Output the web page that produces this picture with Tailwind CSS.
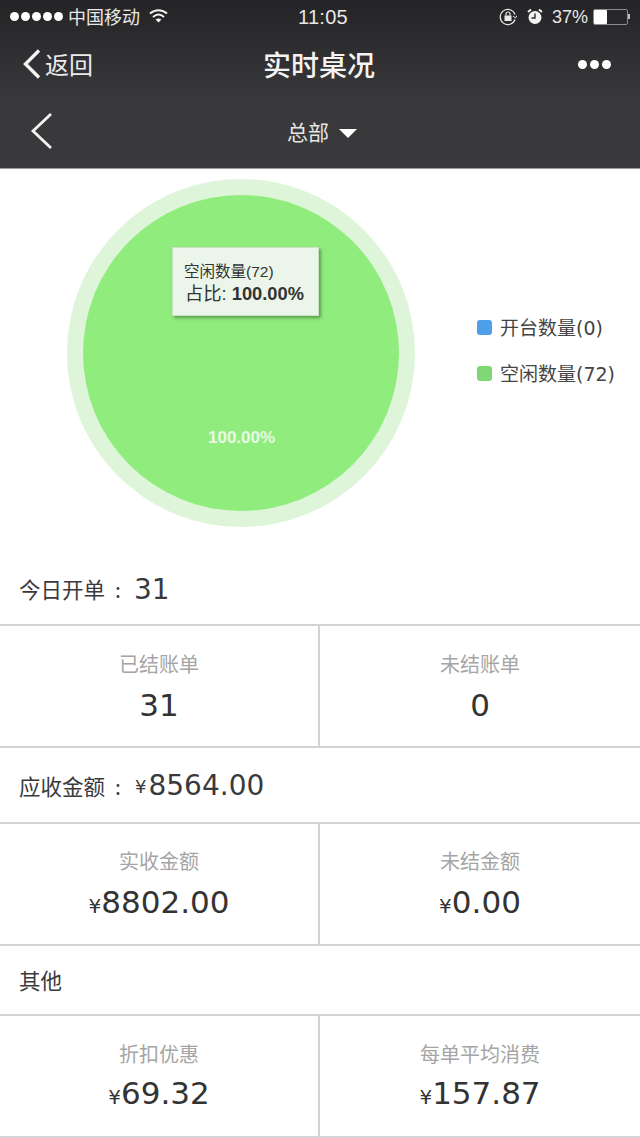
<!DOCTYPE html>
<html lang="zh-CN">

<head>
    <meta charset="UTF-8">
    <title>实时桌况</title>
    <script src="https://cdn.jsdelivr.net/npm/@tailwindcss/browser@4"></script>
</head>

<body class="bg-white w-[640px] h-[1138px] overflow-hidden font-['Noto_Sans_CJK_SC',sans-serif]">

    <!-- top dark header -->
    <div class="h-[169px] bg-gradient-to-b from-[#242325] via-[#39393b] via-60% to-[#39393b] border-b border-[#9a9a9a] text-white flex flex-col">
        <div class="h-[33px] flex items-center pl-[10px] pr-[10px] text-[18px] text-[#e8e8e8]">
            <div class="flex items-center w-[286px] -mt-[1px]">
                <div class="flex gap-[2px]">
                    <span class="w-[9px] h-[9px] rounded-full bg-white"></span>
                    <span class="w-[9px] h-[9px] rounded-full bg-white"></span>
                    <span class="w-[9px] h-[9px] rounded-full bg-white"></span>
                    <span class="w-[9px] h-[9px] rounded-full bg-white"></span>
                    <span class="w-[9px] h-[9px] rounded-full bg-white"></span>
                </div>
                <span class="ml-[5px] leading-none">中国移动</span>
                <svg class="ml-[9px]" width="19" height="14" viewBox="0 0 19 14" fill="none" stroke="#f2f2f2" stroke-width="2">
                    <path d="M1 4.600C6 0 13 0 18 4.600" />
                    <path d="M4 8C7.400 5 11.600 5 15 8" />
                    <path d="M9.500 13.500L6.600 10.600C8.400 9.200 10.600 9.200 12.400 10.600Z" fill="#f2f2f2" stroke="none" />
                </svg>
            </div>
            <span class="font-['Liberation_Sans',sans-serif] text-[20px] font-medium tracking-[0.3px] w-[54px] text-center">11:05</span>
            <div class="flex items-center flex-1 justify-end">
                <svg width="18" height="18" viewBox="0 0 18 18" fill="none" stroke="#e8e8e8" stroke-width="1.200">
                    <path d="M16 6.500A7.600 7.600 0 1 0 16 11.500" />
                    <path d="M14 8l2.500 2 1.500-2.500" stroke-width="1" />
                    <rect x="5.500" y="7.500" width="7" height="5.500" fill="#e8e8e8" stroke="none" />
                    <path d="M7 7.500V6a2 2 0 0 1 4 0v1.500" />
                </svg>
                <svg class="ml-[10px]" width="16" height="17" viewBox="0 0 16 17">
                    <circle cx="8" cy="9.500" r="6.500" fill="#f2f2f2" />
                    <path d="M8 5.500V10H4.500" fill="none" stroke="#2a2a2c" stroke-width="1.400" />
                    <path d="M1 4L4 1.500M15 4L12 1.500" stroke="#f2f2f2" stroke-width="2" />
                </svg>
                <span class="ml-[9px] font-['Liberation_Sans',sans-serif] text-[18px] leading-none">37%</span>
                <div class="ml-[5px] w-[35px] h-[16px] border border-[#8c8c8c] rounded-[2px] flex">
                    <div class="w-[13px] bg-white rounded-[1px]"></div>
                </div>
                <div class="w-[2px] h-[5px] bg-[#bdbdbd]"></div>
            </div>
        </div>
        <div class="h-[60px] flex items-center justify-between pl-[22px] pr-[29px] pt-[2px]">
            <div class="flex items-center w-[100px]">
                <svg width="20" height="32" viewBox="0 0 20 32" fill="none" stroke="#f4f4f4" stroke-width="3.400">
                    <path d="M17 2.500L3.500 16L17 29.500" />
                </svg>
                <span class="ml-[3px] text-[24px] leading-none text-[#ececec]">返回</span>
            </div>
            <span class="ml-[5px] text-[28px] leading-none font-medium text-[#f4f4f4]">实时桌况</span>
            <div class="w-[100px] flex justify-end gap-[3px]">
                <span class="w-[9px] h-[9px] rounded-full bg-white"></span>
                <span class="w-[9px] h-[9px] rounded-full bg-white"></span>
                <span class="w-[9px] h-[9px] rounded-full bg-white"></span>
            </div>
        </div>
        <div class="flex-1 relative flex items-center justify-center">
            <svg class="absolute left-[30px] top-[19px]" width="24" height="38" viewBox="0 0 24 38" fill="none" stroke="#f4f4f4" stroke-width="2.800">
                <path d="M21 2L3 19L21 36" />
            </svg>
            <div class="flex items-center pt-[2px] pl-[4px]">
                <span class="text-[21px] leading-none text-[#e6e6e6]">总部</span>
                <span class="ml-[10px] mt-[3px] w-0 h-0 border-x-[9px] border-x-transparent border-t-[9px] border-t-white"></span>
            </div>
        </div>
    </div>

    <!-- pie chart with legend -->
    <div class="h-[386px] flex items-start relative">
        <svg class="ml-[67px] mt-[10px]" width="348" height="348" viewBox="0 0 348 348">
            <circle cx="174" cy="174" r="174" fill="#def5da" />
            <circle cx="174" cy="174" r="158" fill="#90ed7d" />
        </svg>
        <span class="absolute left-[208px] top-[259px] text-[17px] leading-[20px] font-semibold font-['Liberation_Sans',sans-serif] text-[#e9f9e5]">100.00%</span>
        <div class="absolute left-[172px] top-[78px] w-[147px] h-[69px] bg-[#ebf5e9] border border-[#c9e5c3] shadow-[2px_2px_3px_rgba(70,120,60,0.7)] pl-[11px] pt-[14px] text-[#333]">
            <div class="text-[15.500px] leading-[20px] font-['Liberation_Sans','Noto_Sans_CJK_SC',sans-serif]">空闲数量(72)</div>
            <div class="ml-[1px] text-[18.300px] leading-[24px] font-['Liberation_Sans','Noto_Sans_CJK_SC',sans-serif]">占比: <b>100.00%</b></div>
        </div>
        <div class="ml-[62px] mt-[148px] flex flex-col gap-[23px] text-[#444] text-[19px] leading-[23px] font-['DejaVu_Sans','Noto_Sans_CJK_SC',sans-serif]">
            <div class="flex items-center">
                <span class="w-[15px] h-[15px] -mt-[2px] rounded-[3px] bg-[#4c9fe8]"></span>
                <span class="ml-[8px]">开台数量(0)</span>
            </div>
            <div class="flex items-center">
                <span class="w-[15px] h-[15px] -mt-[2px] rounded-[3px] bg-[#7fd873]"></span>
                <span class="ml-[8px]">空闲数量(72)</span>
            </div>
        </div>
    </div>

    <!-- today -->
    <div class="h-[71px] border-b-2 border-[#d4d2d6] pl-[19px] flex items-center text-[#3a3a3c] pb-[1px]">
        <span class="text-[21.500px] leading-none">今日开单</span>
        <span class="text-[21px] leading-none w-[26px] mr-[3px] text-center">:</span>
        <span class="text-[28px] leading-none mt-[1px] font-['DejaVu_Sans',sans-serif]">31</span>
    </div>
    <div class="grid grid-cols-2 h-[122px] border-b-2 border-[#d4d2d6]">
        <div class="border-r-2 border-[#d4d2d6] flex flex-col items-center pt-[25px]">
            <span class="text-[20px] leading-[26px] text-[#a5a5a5]">已结账单</span>
            <span class="mt-[10px] text-[31px] leading-[36px] text-[#333] font-['DejaVu_Sans',sans-serif]">31</span>
        </div>
        <div class="flex flex-col items-center pt-[25px]">
            <span class="text-[20px] leading-[26px] text-[#a5a5a5]">未结账单</span>
            <span class="mt-[10px] text-[31px] leading-[36px] text-[#333] font-['DejaVu_Sans',sans-serif]">0</span>
        </div>
    </div>

    <!-- receivable -->
    <div class="h-[76px] border-b-2 border-[#d4d2d6] pl-[19px] flex items-center text-[#3a3a3c] pt-[2px]">
        <span class="text-[21.500px] leading-none">应收金额</span>
        <span class="text-[21px] leading-none w-[26px] mr-[4px] text-center">:</span>
        <span class="text-[18px] font-['DejaVu_Sans',sans-serif] mr-[2px]">¥</span>
        <span class="text-[28px] leading-none font-['DejaVu_Sans',sans-serif]">8564.00</span>
    </div>
    <div class="grid grid-cols-2 h-[122px] border-b-2 border-[#d4d2d6]">
        <div class="border-r-2 border-[#d4d2d6] flex flex-col items-center pt-[24px]">
            <span class="text-[20px] leading-[26px] text-[#a5a5a5]">实收金额</span>
            <span class="mt-[10px] text-[31px] leading-[36px] text-[#333] font-['DejaVu_Sans',sans-serif]"><span class="text-[20px]">¥</span>8802.00</span>
        </div>
        <div class="flex flex-col items-center pt-[24px]">
            <span class="text-[20px] leading-[26px] text-[#a5a5a5]">未结金额</span>
            <span class="mt-[10px] text-[31px] leading-[36px] text-[#333] font-['DejaVu_Sans',sans-serif]"><span class="text-[20px]">¥</span>0.00</span>
        </div>
    </div>

    <!-- other -->
    <div class="h-[70px] border-b-2 border-[#d4d2d6] pl-[19px] flex items-center text-[#3a3a3c]">
        <span class="text-[21.500px] leading-none">其他</span>
    </div>
    <div class="grid grid-cols-2 h-[122px] border-b-2 border-[#d4d2d6]">
        <div class="border-r-2 border-[#d4d2d6] flex flex-col items-center pt-[25px]">
            <span class="text-[20px] leading-[26px] text-[#a5a5a5]">折扣优惠</span>
            <span class="mt-[8px] text-[31px] leading-[36px] text-[#333] font-['DejaVu_Sans',sans-serif]"><span class="text-[20px]">¥</span>69.32</span>
        </div>
        <div class="flex flex-col items-center pt-[25px]">
            <span class="text-[20px] leading-[26px] text-[#a5a5a5]">每单平均消费</span>
            <span class="mt-[8px] text-[31px] leading-[36px] text-[#333] font-['DejaVu_Sans',sans-serif]"><span class="text-[20px]">¥</span>157.87</span>
        </div>
    </div>
</body>

</html>
